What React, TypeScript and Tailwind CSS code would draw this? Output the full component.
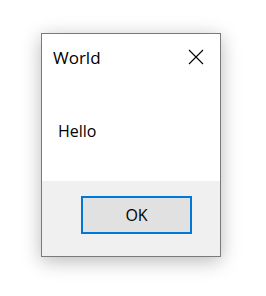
export default function App() {
  return (
    <div className="w-[266px] h-[296px] bg-white pl-[41px] pt-[33px]" style={{ fontFamily: '"Open Sans", "Noto Sans", sans-serif' }}>
      <div className="w-[180px] h-[224px] border border-[#7a7a7a] bg-white flex flex-col shadow-[0_4px_18px_rgba(0,0,0,0.28)]">
        <div className="h-[46px] flex items-center justify-between pl-[11px] pr-[16px] shrink-0">
          <span className="text-[17px] text-black leading-none">World</span>
          <svg width="16" height="16" viewBox="0 0 16 16" className="text-black">
            <path d="M1 1 L15 15 M15 1 L1 15" stroke="currentColor" strokeWidth="1.1" fill="none" />
          </svg>
        </div>
        <div className="flex-1 pl-[16px] pt-[39px]">
          <span className="text-[16px] text-black leading-none">Hello</span>
        </div>
        <div className="h-[75px] bg-[#f0f0f0] shrink-0 pl-[39px] pt-[15px]">
          <button className="w-[111px] h-[38px] border-2 border-[#0078d7] bg-[#e1e1e1] text-[16px] text-black flex items-center justify-center">
            OK
          </button>
        </div>
      </div>
    </div>
  );
}
